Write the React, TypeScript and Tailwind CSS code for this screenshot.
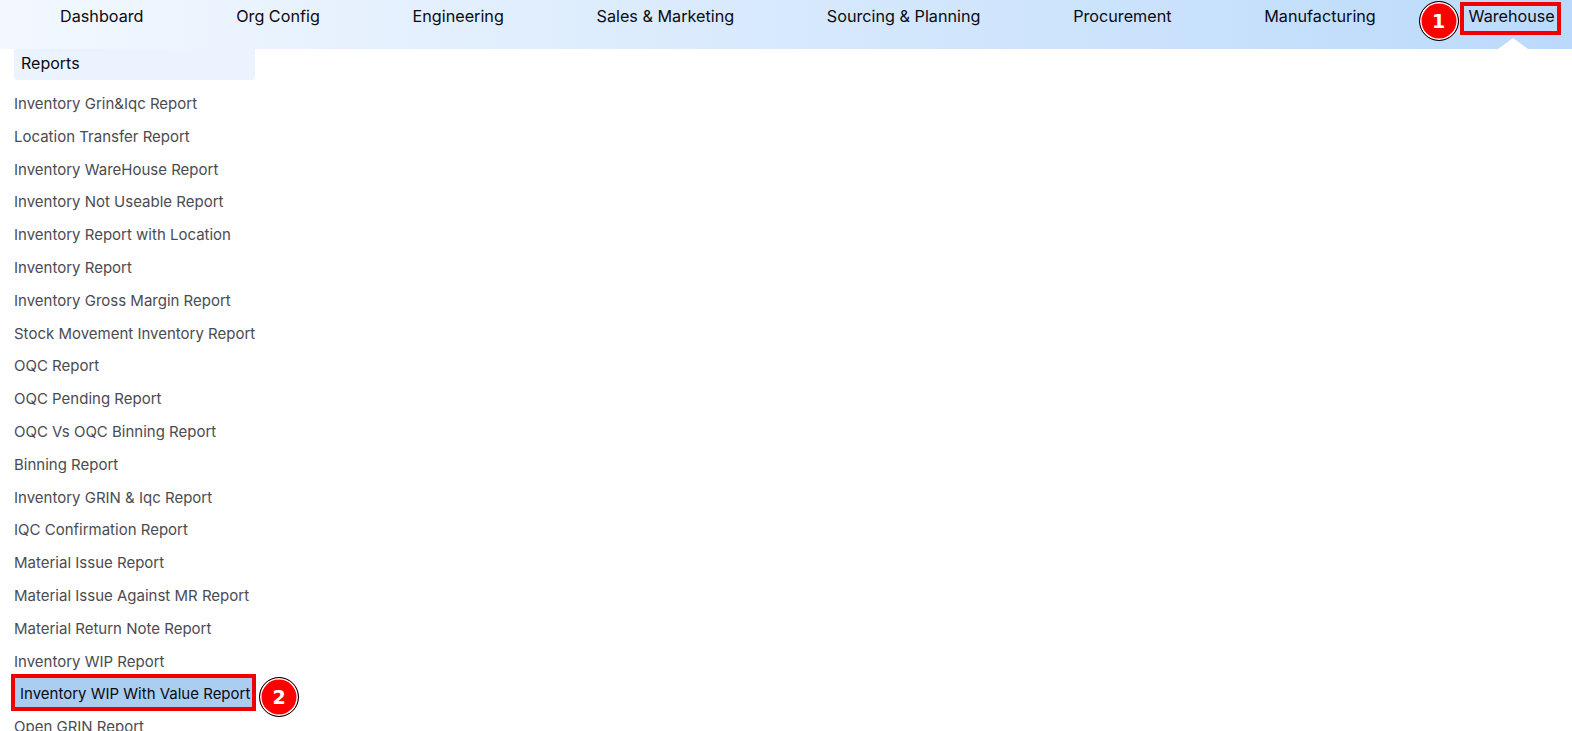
const nav = ["Dashboard", "Org Config", "Engineering", "Sales & Marketing", "Sourcing & Planning", "Procurement", "Manufacturing"];
const before = ["Inventory Grin&Iqc Report", "Location Transfer Report", "Inventory WareHouse Report", "Inventory Not Useable Report", "Inventory Report with Location", "Inventory Report", "Inventory Gross Margin Report", "Stock Movement Inventory Report", "OQC Report", "OQC Pending Report", "OQC Vs OQC Binning Report", "Binning Report", "Inventory GRIN & Iqc Report", "IQC Confirmation Report", "Material Issue Report", "Material Issue Against MR Report", "Material Return Note Report", "Inventory WIP Report"];

function Badge({ n, className }: { n: number; className: string }) {
  return (
    <span className={`absolute flex h-[40px] w-[40px] items-center justify-center rounded-full border-[1px] border-black bg-[#ff0000] text-[19px] font-bold text-white shadow-[inset_0_0_0_1.5px_white] [font-family:'DejaVu_Sans',sans-serif] ${className}`}>
      {n}
    </span>
  );
}

export default function App() {
  return (
    <div className="h-[731px] w-[1572px] overflow-hidden bg-white [font-family:Inter,sans-serif]">
      <header className="flex h-[49px] items-start bg-gradient-to-r from-[#f3f8fe] to-[#bbdafb] pl-[60px] pt-[4px] text-[16.2px] leading-[24px] text-[#0a0a14]">
        <nav className="flex gap-[92.7px]">
          {nav.map((item) => (
            <span key={item} className="whitespace-nowrap">{item}</span>
          ))}
          <span className="relative whitespace-nowrap">
            Warehouse
            <Badge n={1} className="-top-[3px] -left-[50px]" />
            <span className="absolute -top-[2px] -left-[9px] -right-[6px] h-[33px] border-[4px] border-[#f00000]" />
            <span className="absolute left-[29px] top-[34px] h-0 w-0 border-x-[15px] border-b-[11px] border-x-transparent border-b-white" />
          </span>
        </nav>
      </header>
      <aside className="ml-[14px] w-[241px] text-[15px] leading-[22px] text-[#4b4b52]">
        <div className="h-[31px] rounded-b-[4px] bg-[#ebf3fe] pl-[7px] pt-[2px] text-[16px] leading-[24px] text-[#0a0a14]">Reports</div>
        <ul className="mt-[7.6px]">
          {before.map((item) => (
            <li key={item} className="flex h-[32.8px] items-center whitespace-nowrap">{item}</li>
          ))}
          <li className="relative flex h-[32.8px] items-center whitespace-nowrap border-l border-[#4a90e2] bg-[#abcdf0] pl-[5px] text-[#0a0a14]">
            Inventory WIP With Value Report
            <span className="absolute -left-[4px] -right-[1px] -top-[4px] h-[37px] border-[4px] border-[#f00000]" />
            <Badge n={2} className="-top-[1px] left-[244px]" />
          </li>
          <li className="flex h-[32.8px] items-center whitespace-nowrap">Open GRIN Report</li>
        </ul>
      </aside>
    </div>
  );
}
